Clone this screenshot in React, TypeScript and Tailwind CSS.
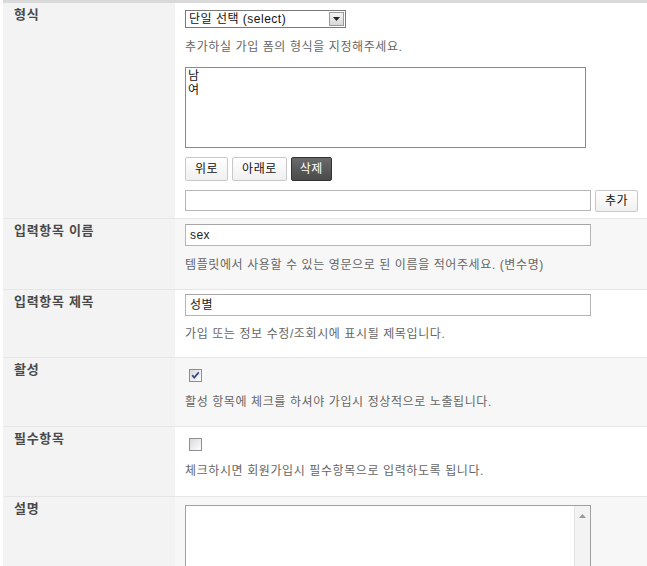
import React from "react";

const FONT = { fontFamily: '"Liberation Sans", "Noto Sans CJK KR", sans-serif' };

function Label({ children }: { children: React.ReactNode }) {
  return (
    <div className="bg-[#f3f3f3] pl-[11px] pt-[5px] text-[13px] font-bold leading-[14px] tracking-[0.7px] text-[#4a4a4a]">
      {children}
    </div>
  );
}

function Help({ children, className = "" }: { children: React.ReactNode; className?: string }) {
  return <div className={"text-[12px] leading-[14px] tracking-[0.6px] text-[#666] " + className}>{children}</div>;
}

function TextInput({ value }: { value: string }) {
  return (
    <div className="flex h-[22px] w-[406px] items-center border border-[#b5b5b5] border-t-[#a5a5a5] bg-white pl-[4px] text-[12px] tracking-[0.4px] text-[#222]">
      {value}
    </div>
  );
}

function Btn({ children, dark = false }: { children: React.ReactNode; dark?: boolean }) {
  return dark ? (
    <div className="flex h-[24px] items-center rounded-[2px] border border-[#333] bg-gradient-to-b from-[#6a6a6a] to-[#4a4a4a] px-[8px] text-[12px] tracking-[0.5px] text-white">
      {children}
    </div>
  ) : (
    <div className="flex h-[24px] items-center rounded-[2px] border border-[#c8c8c8] bg-gradient-to-b from-white to-[#f0f0f0] px-[9px] text-[12px] tracking-[0.5px] text-[#111]">
      {children}
    </div>
  );
}

function Checkbox({ checked }: { checked: boolean }) {
  return (
    <svg width="13" height="13" viewBox="0 0 13 13" className="ml-[4px]">
      <defs>
        <linearGradient id={checked ? "cbg1" : "cbg2"} x1="0" y1="0" x2="1" y2="1">
          <stop offset="0" stopColor="#d8d8d8" />
          <stop offset="1" stopColor="#ffffff" />
        </linearGradient>
      </defs>
      <rect x="0.5" y="0.5" width="12" height="12" fill={`url(#${checked ? "cbg1" : "cbg2"})`} stroke="#8c8f96" />
      {checked && (
        <path d="M3.2 6.2 L5.2 8.6 L9.8 3.4" fill="none" stroke="#3b4c8c" strokeWidth="1.8" />
      )}
    </svg>
  );
}

export default function App() {
  return (
    <div className="min-h-[566px] w-[647px] overflow-hidden bg-white pl-[3px]" style={FONT}>
      <div className="border-t-[3px] border-[#d9d9d9]">
        {/* Row 1 */}
        <div className="grid grid-cols-[172px_1fr]">
          <Label>형식</Label>
          <div className="bg-white pb-[6px] pl-[10px] pt-[7px]">
            <div className="flex h-[18px] w-[161px] items-center border border-[#7a7a7a] bg-white text-[12px] tracking-[0.5px] text-[#111]">
              <span className="flex-1 pl-[3px]">단일 선택 (select)</span>
              <span className="mr-[1px] flex h-[14px] w-[15px] items-center justify-center border border-[#9a9a9a] bg-gradient-to-b from-[#f4f4f4] to-[#d8d8d8]">
                <svg width="7" height="4" viewBox="0 0 7 4">
                  <path d="M0 0 H7 L3.5 4 Z" fill="#222" />
                </svg>
              </span>
            </div>
            <Help className="mt-[12px]">추가하실 가입 폼의 형식을 지정해주세요.</Help>
            <div className="mt-[13px] h-[81px] w-[401px] border border-[#8a8a8a] bg-white pl-[2px] pt-[1px] text-[12px] leading-[14px] text-[#111]">
              <div>남</div>
              <div>여</div>
            </div>
            <div className="mt-[9px] flex gap-[4px]">
              <Btn>위로</Btn>
              <Btn>아래로</Btn>
              <Btn dark>삭제</Btn>
            </div>
            <div className="mt-[9px] flex gap-[4px]">
              <div className="h-[21px] w-[406px] border border-[#b5b5b5] bg-white" />
              <div className="flex h-[22px] items-center rounded-[2px] border border-[#c8c8c8] bg-gradient-to-b from-white to-[#f0f0f0] px-[9px] text-[12px] tracking-[0.5px] text-[#111]">
                추가
              </div>
            </div>
          </div>
        </div>

        {/* Row 2 */}
        <div className="grid grid-cols-[172px_1fr] border-t border-[#e6e6e6]">
          <Label>입력항목 이름</Label>
          <div className="bg-[#f7f7f7] pb-[17px] pl-[10px] pt-[5px]">
            <TextInput value="sex" />
            <Help className="mt-[12px]">템플릿에서 사용할 수 있는 영문으로 된 이름을 적어주세요. (변수명)</Help>
          </div>
        </div>

        {/* Row 3 */}
        <div className="grid grid-cols-[172px_1fr] border-t border-[#e6e6e6]">
          <Label>입력항목 제목</Label>
          <div className="bg-white pb-[16px] pl-[10px] pt-[4px]">
            <TextInput value="성별" />
            <Help className="mt-[11px]">가입 또는 정보 수정/조회시에 표시될 제목입니다.</Help>
          </div>
        </div>

        {/* Row 4 */}
        <div className="grid grid-cols-[172px_1fr] border-t border-[#e6e6e6]">
          <Label>활성</Label>
          <div className="bg-[#f7f7f7] pb-[17px] pl-[10px] pt-[11px]">
            <Checkbox checked />
            <Help className="mt-[13px]">활성 항목에 체크를 하셔야 가입시 정상적으로 노출됩니다.</Help>
          </div>
        </div>

        {/* Row 5 */}
        <div className="grid grid-cols-[172px_1fr] border-t border-[#e6e6e6]">
          <Label>필수항목</Label>
          <div className="bg-white pb-[18px] pl-[10px] pt-[11px]">
            <Checkbox checked={false} />
            <Help className="mt-[13px]">체크하시면 회원가입시 필수항목으로 입력하도록 됩니다.</Help>
          </div>
        </div>

        {/* Row 6 */}
        <div className="grid grid-cols-[172px_1fr] border-t border-[#e6e6e6]">
          <Label>설명</Label>
          <div className="h-[80px] bg-[#f7f7f7] pl-[10px] pt-[8px]">
            <div className="flex h-[90px] w-[406px] border border-[#a0a0a0] bg-white">
              <div className="flex-1" />
              <div className="flex w-[16px] justify-center border-l border-[#e3e3e3] bg-[#f3f3f3] pt-[8px]">
                <svg width="7" height="4" viewBox="0 0 7 4">
                  <path d="M0 4 H7 L3.5 0 Z" fill="#9a9a9a" />
                </svg>
              </div>
            </div>
          </div>
        </div>
      </div>
    </div>
  );
}
